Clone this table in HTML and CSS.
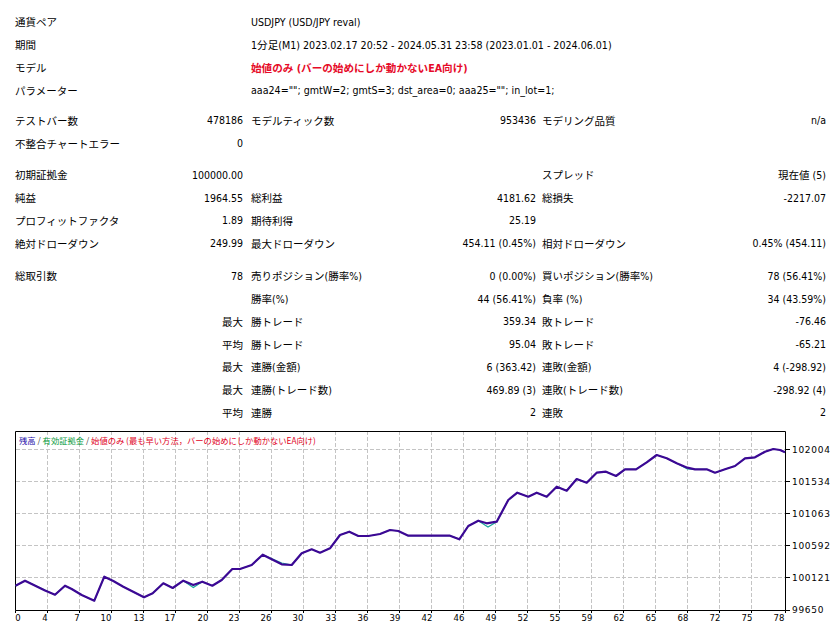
FILE: index.html
```html
<!DOCTYPE html>
<html lang="ja">
<head>
<meta charset="utf-8">
<title>Strategy Tester Report</title>
<link rel="stylesheet" href="styles.css">
</head>
<body>
<div class="report">
  <div class="sec">
    <div class="lbl">通貨ペア</div><div></div><div class="wide">USDJPY (USD/JPY reval)</div>
    <div class="lbl">期間</div><div></div><div class="wide">1分足(M1) 2023.02.17 20:52 - 2024.05.31 23:58 (2023.01.01 - 2024.06.01)</div>
    <div class="lbl">モデル</div><div></div><div class="wide red">始値のみ (バーの始めにしか動かないEA向け)</div>
    <div class="lbl">パラメーター</div><div></div><div class="wide">aaa24=""; gmtW=2; gmtS=3; dst_area=0; aaa25=""; in_lot=1;</div>
  </div>
  <div class="sec s2">
    <div class="lbl">テストバー数</div><div class="num">478186</div><div class="lbl c3">モデルティック数</div><div class="num">953436</div><div class="lbl c5">モデリング品質</div><div class="num">n/a</div>
    <div class="lbl">不整合チャートエラー</div><div class="num">0</div><div></div><div></div><div></div><div></div>
  </div>
  <div class="sec s3">
    <div class="lbl">初期証拠金</div><div class="num">100000.00</div><div></div><div></div><div class="lbl c5">スプレッド</div><div class="num">現在値 (5)</div>
    <div class="lbl">純益</div><div class="num">1964.55</div><div class="lbl c3">総利益</div><div class="num">4181.62</div><div class="lbl c5">総損失</div><div class="num">-2217.07</div>
    <div class="lbl">プロフィットファクタ</div><div class="num">1.89</div><div class="lbl c3">期待利得</div><div class="num">25.19</div><div></div><div></div>
    <div class="lbl">絶対ドローダウン</div><div class="num">249.99</div><div class="lbl c3">最大ドローダウン</div><div class="num">454.11 (0.45%)</div><div class="lbl c5">相対ドローダウン</div><div class="num">0.45% (454.11)</div>
  </div>
  <div class="sec s4">
    <div class="lbl">総取引数</div><div class="num">78</div><div class="lbl c3">売りポジション(勝率%)</div><div class="num">0 (0.00%)</div><div class="lbl c5">買いポジション(勝率%)</div><div class="num">78 (56.41%)</div>
    <div></div><div></div><div class="lbl c3">勝率(%)</div><div class="num">44 (56.41%)</div><div class="lbl c5">負率 (%)</div><div class="num">34 (43.59%)</div>
    <div></div><div class="num">最大</div><div class="lbl c3">勝トレード</div><div class="num">359.34</div><div class="lbl c5">敗トレード</div><div class="num">-76.46</div>
    <div></div><div class="num">平均</div><div class="lbl c3">勝トレード</div><div class="num">95.04</div><div class="lbl c5">敗トレード</div><div class="num">-65.21</div>
    <div></div><div class="num">最大</div><div class="lbl c3">連勝(金額)</div><div class="num">6 (363.42)</div><div class="lbl c5">連敗(金額)</div><div class="num">4 (-298.92)</div>
    <div></div><div class="num">最大</div><div class="lbl c3">連勝(トレード数)</div><div class="num">469.89 (3)</div><div class="lbl c5">連敗(トレード数)</div><div class="num">-298.92 (4)</div>
    <div></div><div class="num">平均</div><div class="lbl c3">連勝</div><div class="num">2</div><div class="lbl c5">連敗</div><div class="num">2</div>
  </div>
</div>

<svg class="chart" width="833" height="201" viewBox="0 425 833 201" xmlns="http://www.w3.org/2000/svg">
  <g class="grid">
    <path d="M47.5 431V610M79.5 431V610M111.5 431V610M143.5 431V610M175.5 431V610M207.5 431V610M239.5 431V610M271.5 431V610M303.5 431V610M335.5 431V610M367.5 431V610M399.5 431V610M431.5 431V610M463.5 431V610M495.5 431V610M527.5 431V610M559.5 431V610M591.5 431V610M623.5 431V610M655.5 431V610M687.5 431V610M719.5 431V610M751.5 431V610"/>
    <path d="M16 449.5H785M16 481.5H785M16 513.5H785M16 545.5H785M16 577.5H785"/>
  </g>
  <path class="frame" d="M15.5 431.5H785.5V610.5H15.5Z"/>
  <path class="ticks" d="M785.5 449.5H790M785.5 481.5H790M785.5 513.5H790M785.5 545.5H790M785.5 577.5H790M785.5 610.5H790M15.5 610.5V613M47.5 610.5V613M79.5 610.5V613M111.5 610.5V613M143.5 610.5V613M175.5 610.5V613M207.5 610.5V613M239.5 610.5V613M271.5 610.5V613M303.5 610.5V613M335.5 610.5V613M367.5 610.5V613M399.5 610.5V613M431.5 610.5V613M463.5 610.5V613M495.5 610.5V613M527.5 610.5V613M559.5 610.5V613M591.5 610.5V613M623.5 610.5V613M655.5 610.5V613M687.5 610.5V613M719.5 610.5V613M751.5 610.5V613M785.5 610.5V613"/>

  <text class="legend" x="19" y="443.5"><tspan class="lg-bal">残高</tspan><tspan class="lg-sep"> / </tspan><tspan class="lg-eq">有効証拠金</tspan><tspan class="lg-sep"> / </tspan><tspan class="lg-mod">始値のみ (最も早い方法，バーの始めにしか動かないEA向け)</tspan></text>

  <g class="ylab">
    <text x="792" y="452.5">102004</text>
    <text x="792" y="484.5">101534</text>
    <text x="792" y="516.5">101063</text>
    <text x="792" y="548.5">100592</text>
    <text x="792" y="580.5">100121</text>
    <text x="792" y="613">99650</text>
  </g>
  <g class="xlab">
    <text x="18" y="621">0</text>
    <text x="45" y="621">4</text>
    <text x="77" y="621">7</text>
    <text x="106" y="621">10</text>
    <text x="139" y="621">13</text>
    <text x="170" y="621">17</text>
    <text x="203" y="621">20</text>
    <text x="234" y="621">23</text>
    <text x="266" y="621">26</text>
    <text x="298" y="621">30</text>
    <text x="331" y="621">33</text>
    <text x="363" y="621">36</text>
    <text x="395" y="621">39</text>
    <text x="427" y="621">42</text>
    <text x="459" y="621">46</text>
    <text x="491" y="621">49</text>
    <text x="523" y="621">52</text>
    <text x="555" y="621">55</text>
    <text x="587" y="621">59</text>
    <text x="619" y="621">62</text>
    <text x="651" y="621">65</text>
    <text x="683" y="621">68</text>
    <text x="715" y="621">72</text>
    <text x="747" y="621">75</text>
    <text x="779" y="621">78</text>
  </g>

  <polyline class="equity" points="15.5,585.7 25,580.7 50,592.5 55,594.7 65,585.7 71.7,589 81.7,595 94.3,600.7 104.3,576.7 113.3,581 123.3,586.7 144,597.3 152.7,593.3 163.3,583.3 172.7,588 183.3,580.7 193.3,587.5 202.3,581.7 212.3,585.7 221.7,580 232.3,569 240,569 251.7,565 262.7,554.7 281.7,563 291.7,565 301.7,553.3 311.7,549.3 320,552.7 330,548.3 340,535 349.3,531.7 358.3,536 368.3,536 380,534 390,530 398.3,531 408.3,535.7 450,535.7 459.3,539.3 468.3,526 478.3,520.7 488,527 496.7,521.7 508.3,500 517.3,492.7 528.3,496.7 536.7,492.7 546.7,496.7 556.7,486.7 566.7,490.7 576.7,479 586.7,482.7 596.7,472.7 606,471.7 616,476 625,469.3 636,469.3 646.7,462.3 656.7,455 666.7,458.3 676.7,463.3 687.3,469 695,469.3 706.7,469.3 715,472.7 725,469.3 735,466 745,458.3 755,457.3 765,451.7 773.3,449 780,450 785,452.3"/>
  <polyline class="balance" points="15.5,585.7 25,580.7 45,590.5 55,594.7 65,585.7 71.7,589 81.7,595 94.3,600.7 104.3,576.7 113.3,581 123.3,586.7 144,597.3 152.7,593.3 163.3,583.3 172.7,588 183.3,580.7 193.3,585 202.3,581.7 212.3,585.7 221.7,580 232.3,569 240,569 251.7,565 262.7,554.7 281.7,564.3 291.7,565 301.7,553.3 311.7,549.3 320,552.7 330,548.3 340,535 349.3,531.7 358.3,536 368.3,536 380,534 390,530 398.3,531 408.3,535.7 450,535.7 459.3,539.3 468.3,526 478.3,520.7 486.7,523.3 496.7,521.7 508.3,500 517.3,492.7 528.3,496.7 536.7,492.7 546.7,496.7 556.7,486.7 566.7,490.7 576.7,479 586.7,482.7 596.7,472.7 606,471.7 616,476 625,469.3 636,469.3 646.7,462.3 656.7,455 666.7,458.3 676.7,463.3 687.3,467.7 695,469.3 706.7,469.3 715,472.7 725,469.3 735,466 745,458.3 755,457.3 765,451.7 773.3,449 780,450 785,452.3"/>
</svg>
</body>
</html>
```

FILE: styles.css
```css
html, body {
  margin: 0;
  padding: 0;
  background: #ffffff;
}

body {
  width: 833px;
  height: 626px;
  overflow: hidden;
  font-family: "DejaVu Sans Condensed", "Liberation Sans", "Noto Sans CJK JP", sans-serif;
  font-size: 10.5px;
  color: #000000;
}

.report {
  box-sizing: border-box;
  height: 425px;
  padding-top: 10.5px;
}

.sec {
  display: grid;
  grid-template-columns: 160px 83px 197px 96px 184px 106px;
  grid-auto-rows: 22.75px;
  align-items: center;
  white-space: nowrap;
}

.s2 { margin-top: 7.5px; }
.s3 { margin-top: 9px; }
.s4 { margin-top: 10px; }

.lbl {
  padding-left: 15px;
}

.lbl.c3 { padding-left: 8px; }
.lbl.c5 { padding-left: 6px; }

.num {
  text-align: right;
}

.wide {
  grid-column: 3 / -1;
  padding-left: 8px;
  font-size: 10.6px;
}

.red {
  color: #e60a28;
  font-weight: bold;
}

.chart {
  display: block;
}

.grid path {
  fill: none;
  stroke: #c4c4c4;
  stroke-width: 1;
  stroke-dasharray: 4 2;
}

.frame {
  fill: none;
  stroke: #000000;
  stroke-width: 1;
}

.ticks {
  fill: none;
  stroke: #000000;
  stroke-width: 1;
}

.legend {
  font-family: "Noto Sans CJK JP", sans-serif;
  font-size: 8.3px;
}

.lg-bal { fill: #1c0aa8; }
.lg-sep { fill: #404040; }
.lg-eq { fill: #0a9a3c; }
.lg-mod { fill: #e0001c; }

.ylab text {
  font-family: "DejaVu Sans", sans-serif;
  font-size: 9px;
  letter-spacing: 0.7px;
  fill: #000000;
}

.xlab text {
  font-family: "DejaVu Sans", sans-serif;
  font-size: 8.5px;
  text-anchor: middle;
  fill: #000000;
}

.equity {
  fill: none;
  stroke: #1aa89a;
  stroke-width: 1.2;
}

.balance {
  fill: none;
  stroke: #3c0894;
  stroke-width: 2.2;
  stroke-linejoin: round;
}
```
